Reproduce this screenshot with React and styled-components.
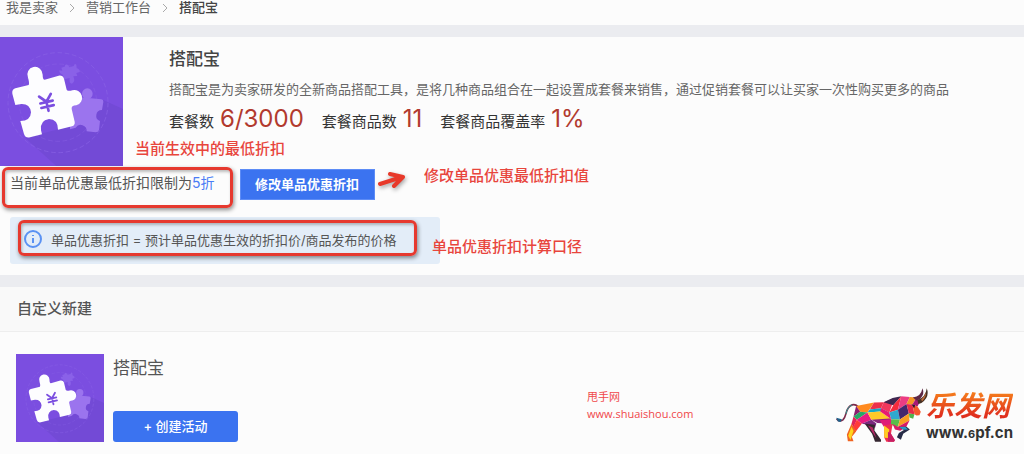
import styled, { createGlobalStyle, css } from 'styled-components';

const LINKS = ['我是卖家', '营销工作台'];

const STATS = [
  { label: '套餐数', value: '6/3000' },
  { label: '套餐商品数', value: '11' },
  { label: '套餐商品覆盖率', value: '1%' },
];

const PuzzleIcon = ({ viewBox }) => (
  <svg viewBox={viewBox} aria-hidden="true">
    <rect x="-20" y="19" width="389" height="389" fill="#7b4ee0" />
    <path d="M75 322L170 408H369V236L308 208L224 285Z" fill="#734ad6" />
    <g fill="none" stroke="#8a62e6" strokeWidth="2" strokeDasharray="14 8">
      <circle cx="174" cy="217" r="150" />
      <circle cx="174" cy="217" r="116" opacity="0.7" />
    </g>
    <g fill="#8a61e8">
      <path d="M184 112L194 109Q196 98 204 105L209 111L221 107Q224 97 229 103L230 113Q242 119 239 125L229 128L232 137L220 138Q227 154 216 160Q206 160 209 143L192 147L188 133Q176 128 178 120L187 121Z" />
    </g>
    <g fill="#9b74ee">
      <circle cx="262" cy="190" r="16" />
      <path d="M210 198L304 207Q311 208 310 215L306 239A17 17 0 0 0 300 272L297 299Q295 306 287 306L260 303A18 18 0 0 0 227 292L210 297Z" />
    </g>
    <g fill="#fdfdff">
      <path d="M46 174L86 164Q89 158 84 142A23 23 0 1 1 128 133Q128 148 134 148L176 136Q188 134 192 145L200 178Q204 184 217 180A23 23 0 0 1 229 225Q213 226 215 236L224 274Q226 284 216 288L174 298Q174 267 147 266Q119 270 123 300L126 312L90 321Q76 324 72 311L61 272Q92 272 93 246Q90 220 64 221L46 224L37 190Q35 178 46 174Z" />
    </g>
    <g
      fill="none"
      stroke="#7b4ee0"
      strokeWidth="8"
      strokeLinecap="round"
      transform="rotate(-13 140 217)"
    >
      <path d="M122 194L140 214L158 194M140 214V242M121 215H159M121 229H159" />
    </g>
  </svg>
);

const BullLogo = () => (
  <svg viewBox="15 20 285 172" width="95" height="57" aria-hidden="true">
    <path
      d="M19 119Q27 130 38 122Q44 116 47 104Q52 82 66 77Q75 74 84 82"
      fill="none"
      stroke="#7c2a4a"
      strokeWidth="5"
    />
    <path d="M18 116L35 120L31 129L23 127Z" fill="#20638c" />
    <path d="M47 104Q52 82 66 77" fill="none" stroke="#2b9a91" strokeWidth="3" />
    <path d="M78 80L132 70L112 100L90 98Z" fill="#ff8a1f" />
    <path d="M78 80L90 98L70 112Z" fill="#8c1d6f" />
    <path d="M90 98L112 100L80 122L70 112Z" fill="#27a867" />
    <path d="M70 112L80 122L70 145L64 134Z" fill="#e12458" />
    <path d="M112 100L124 122L95 134L80 122Z" fill="#e71b81" />
    <path d="M80 122L95 134L77 157L68 146Z" fill="#ff3b38" />
    <path d="M64 134L78 157L65 173L70 187H53L50 166Z" fill="#f06421" />
    <path d="M64 143L70 156L61 183L54 170Z" fill="#ffd51c" />
    <path d="M95 134L124 122L139 133L135 146L110 136Z" fill="#7a267e" />
    <path d="M104 134L135 137L133 154L153 182L153 188H135L126 164Z" fill="#342630" />
    <path d="M114 139L128 145L139 178L130 164Z" fill="#b72666" />
    <path d="M132 70L161 69L153 87L119 91Z" fill="#ed304b" />
    <path d="M119 91L153 87L179 101L151 97L112 100Z" fill="#17a6c7" />
    <path d="M112 100L151 97L184 120L149 123L124 122Z" fill="#ffc928" />
    <path d="M124 122L180 118L191 134L142 132Z" fill="#8c247c" />
    <path d="M161 69L194 56L178 100L153 87Z" fill="#f2385d" />
    <path d="M161 69L188 56L214 51L190 78Z" fill="#3e2750" />
    <path d="M190 78L214 51L204 92L178 100Z" fill="#f42c3d" />
    <path d="M153 87L178 100L184 120L151 97Z" fill="#e71b73" />
    <path d="M178 100L204 92L210 121L184 120Z" fill="#31a9cf" />
    <path d="M184 120L210 121L204 143L181 137Z" fill="#57bd49" />
    <path d="M149 123L184 120L181 153L162 144Z" fill="#df1c78" />
    <path d="M162 139L188 135L183 164L195 184L192 188H169L163 176Z" fill="#ef304d" />
    <path d="M162 139L178 151L174 177L163 176Z" fill="#ffcf22" />
    <path d="M174 158L183 164L195 184L192 188H174Z" fill="#c71f64" />
    <path d="M214 51L240 53L230 74L204 92Z" fill="#ec3d83" />
    <path d="M204 92L230 74L237 103L210 121Z" fill="#44276d" />
    <path d="M210 121L237 103L239 124L204 143Z" fill="#fa9e22" />
    <path d="M188 135L204 143L239 124L229 144L211 155L195 151Z" fill="#d81b65" />
    <path d="M207 144L230 143L240 151L220 164L213 182L201 175L207 162L222 153Z" fill="#272c48" />
    <path d="M207 144L226 143L235 151L221 152Z" fill="#2999c6" />
    <path d="M240 53L260 55L248 76L230 74Z" fill="#f49625" />
    <path d="M230 74L248 76L254 105L237 103Z" fill="#e72a4a" />
    <path d="M260 55L272 65L263 82L248 76Z" fill="#a71978" />
    <path d="M248 76L263 82L273 98L269 108L260 109L254 105Z" fill="#f4592d" />
    <path d="M237 103L254 105L250 119L239 115Z" fill="#51b34b" />
    <path d="M245 75L256 78L253 87Z" fill="#26132f" />
    <path d="M249 55Q274 52 278 27Q286 44 271 59L260 64Z" fill="#5f2946" />
    <path d="M263 63Q288 54 291 27Q301 53 275 71L266 74Z" fill="#463024" />
    <path d="M274 61Q285 52 289 38Q289 55 277 66Z" fill="#be6b39" />
  </svg>
);

const App = () => {
  return (
    <>
      <GlobalStyle />
      <Breadcrumb aria-label="breadcrumb">
        {LINKS.map((text) => (
          <Crumb key={text}>
            <CrumbLink href="#">{text}</CrumbLink>
            <Chevron viewBox="0 0 6 10" aria-hidden="true">
              <path d="M1 1L5 5L1 9" />
            </Chevron>
          </Crumb>
        ))}
        <CurrentCrumb aria-current="page">搭配宝</CurrentCrumb>
      </Breadcrumb>

      <Overview>
        <Hero>
          <HeroPicture>
            <PuzzleIcon viewBox="0 20 369 387" />
          </HeroPicture>
          <HeroText>
            <Title>搭配宝</Title>
            <Description>
              搭配宝是为卖家研发的全新商品搭配工具，是将几种商品组合在一起设置成套餐来销售，通过促销套餐可以让买家一次性购买更多的商品
            </Description>
            <Stats>
              {STATS.map(({ label, value }) => (
                <Stat key={label}>
                  {label}
                  <StatValue>{value}</StatValue>
                </Stat>
              ))}
            </Stats>
          </HeroText>
          <HeroNote>当前生效中的最低折扣</HeroNote>
        </Hero>
        <LimitRow>
          <LimitText>
            当前单品优惠最低折扣限制为<a href="#">5折</a>
          </LimitText>
          <EditButton type="button">修改单品优惠折扣</EditButton>
          <LimitMark />
          <Arrow viewBox="0 0 30 20" aria-hidden="true">
            <path d="M2 13L24 6M12 3L25 6L16 15" />
          </Arrow>
          <EditNote>修改单品优惠最低折扣值</EditNote>
        </LimitRow>
        <InfoBar>
          <InfoIcon viewBox="0 0 18 18" aria-hidden="true">
            <circle cx="9" cy="9" r="8" />
            <path d="M9 8V13M9 5V6" />
          </InfoIcon>
          单品优惠折扣 = 预计单品优惠生效的折扣价/商品发布的价格
          <InfoMark />
          <InfoNote>单品优惠折扣计算口径</InfoNote>
        </InfoBar>
      </Overview>

      <SectionTitle>自定义新建</SectionTitle>
      <Section>
        <CardPicture>
          <PuzzleIcon viewBox="-20 19 389 389" />
        </CardPicture>
        <CardBody>
          <CardTitle>搭配宝</CardTitle>
          <CreateButton type="button">+ 创建活动</CreateButton>
        </CardBody>
        <SiteMark>
          甩手网
          <SiteUrl>www.shuaishou.com</SiteUrl>
        </SiteMark>
        <Brand>
          <BullLogo />
          <BrandText>
            <BrandName>乐发网</BrandName>
            <BrandUrl>
              www.<small>6</small>pf.cn
            </BrandUrl>
          </BrandText>
        </Brand>
      </Section>
    </>
  );
};

const GlobalStyle = createGlobalStyle`
  * {
    box-sizing: border-box;
  }
  body {
    margin: 0;
    background: #fcfcfc;
    color: #555;
    font-family: Inter, 'Noto Sans CJK SC', sans-serif;
    font-size: 13px;
  }
  a {
    color: #4a7df5;
    text-decoration: none;
  }
  h1, h2, h3, p {
    margin: 0;
    font-weight: 400;
  }
  svg {
    display: block;
  }
`;

const Breadcrumb = styled.nav`
  display: flex;
  align-items: center;
  height: 25px;
  padding: 0 6px 12px;
`;

const Crumb = styled.span`
  display: flex;
  align-items: center;
`;

const CrumbLink = styled.a`
  color: #666;
`;

const Chevron = styled.svg`
  width: 6px;
  height: 10px;
  margin: 2px 11px 0;
  fill: none;
  stroke: #aaa;
`;

const CurrentCrumb = styled.span`
  font-weight: 500;
  color: #444;
`;

const Overview = styled.section`
  padding-bottom: 11px;
  border: solid #ebecf0;
  border-width: 12px 0;
`;

const Hero = styled.div`
  position: relative;
  display: flex;
  gap: 46px;
`;

const HeroPicture = styled.div`
  flex: none;
  width: 123px;
`;

const HeroText = styled.div`
  flex: 1;
  padding-top: 10px;
`;

const Title = styled.h1`
  font-size: 17px;
  font-weight: 500;
  line-height: 24px;
  color: #444;
`;

const Description = styled.p`
  margin-top: 8px;
  line-height: 20px;
  color: #666;
`;

const Stats = styled.div`
  display: flex;
  gap: 18px;
  margin-top: 6px;
`;

const Stat = styled.div`
  display: flex;
  align-items: baseline;
  gap: 6px;
  font-size: 15px;
  line-height: 28px;
  color: #333;
`;

const StatValue = styled.span`
  font-size: 24px;
  color: #b23a2e;
`;

const noteStyle = css`
  position: absolute;
  font-size: 15px;
  font-weight: 500;
  line-height: 20px;
  white-space: nowrap;
  color: #e8453c;
`;

const HeroNote = styled.span`
  ${noteStyle}
  left: 135px;
  bottom: 7px;
`;

const LimitRow = styled.div`
  position: relative;
  display: flex;
  gap: 25px;
  padding: 3px 10px 0;
`;

const LimitText = styled.p`
  font-size: 14px;
  line-height: 28px;
`;

const EditButton = styled.button`
  width: 135px;
  height: 31px;
  padding: 0 0 2px;
  border: 1px solid #5d8cf6;
  background: #3b73f0;
  color: #fff;
  font: inherit;
  font-weight: 700;
`;

const markStyle = css`
  position: absolute;
  border: 3px solid #e6392f;
  border-radius: 6px;
  box-shadow: 1px 2px 4px rgba(0, 0, 0, 0.45), inset 1px 2px 3px rgba(0, 0, 0, 0.25);
  pointer-events: none;
`;

const LimitMark = styled.span`
  ${markStyle}
  top: 1px;
  left: 2px;
  width: 231px;
  height: 41px;
`;

const Arrow = styled.svg`
  position: absolute;
  top: 5px;
  left: 378px;
  width: 30px;
  height: 20px;
  fill: none;
  stroke: #e8392a;
  stroke-width: 4;
  stroke-linecap: round;
  stroke-linejoin: round;
  filter: drop-shadow(1px 2px 2px rgba(0, 0, 0, 0.35));
`;

const EditNote = styled.span`
  ${noteStyle}
  top: 0;
  left: 424px;
`;

const InfoBar = styled.div`
  position: relative;
  display: flex;
  align-items: center;
  gap: 9px;
  width: 430px;
  height: 47px;
  margin: 17px 0 0 10px;
  padding: 0 14px 3px;
  border-radius: 3px;
  background: #e3edf8;
`;

const InfoIcon = styled.svg`
  width: 18px;
  height: 18px;
  fill: none;
  stroke: #5a92f3;
  stroke-width: 2;
`;

const InfoMark = styled.span`
  ${markStyle}
  top: 3px;
  left: 8px;
  width: 399px;
  height: 36px;
`;

const InfoNote = styled.span`
  ${noteStyle}
  top: 20px;
  left: 422px;
`;

const SectionTitle = styled.h2`
  padding: 0 17px;
  border-bottom: 1px solid #eee;
  background: #f9f9f9;
  font-size: 15px;
  font-weight: 500;
  line-height: 44px;
  color: #555;
`;

const Section = styled.section`
  position: relative;
  display: flex;
  gap: 9px;
  padding: 22px 16px 12px;
`;

const CardPicture = styled.div`
  width: 88px;
`;

const CardBody = styled.div`
  display: flex;
  flex-direction: column;
  justify-content: space-between;
`;

const CardTitle = styled.h3`
  font-size: 17px;
  line-height: 28px;
`;

const CreateButton = styled.button`
  width: 125px;
  height: 31px;
  padding: 0 0 2px;
  border: 0;
  border-radius: 3px;
  background: #3b73f0;
  color: #fff;
  font: inherit;
  font-weight: 500;
`;

const SiteMark = styled.p`
  position: absolute;
  top: 56px;
  left: 587px;
  font-family: 'Open Sans', 'Noto Sans CJK SC', sans-serif;
  font-size: 11px;
  line-height: 17px;
  color: #f0474a;
`;

const SiteUrl = styled.span`
  display: block;
`;

const Brand = styled.div`
  position: absolute;
  right: 11px;
  bottom: 11px;
  display: flex;
  align-items: flex-end;
`;

const BrandText = styled.div`
  display: flex;
  flex-direction: column;
  margin-left: -4px;
`;

const BrandName = styled.span`
  background: linear-gradient(#f47a1c 15%, #e0301e 75%);
  background-clip: text;
  color: transparent;
  font-size: 28px;
  font-style: italic;
  font-weight: 700;
  line-height: 36px;
`;

const BrandUrl = styled.span`
  font-size: 15px;
  font-weight: 700;
  line-height: 18px;
  color: #333;

  small {
    font-size: 11px;
  }
`;

export default App;
